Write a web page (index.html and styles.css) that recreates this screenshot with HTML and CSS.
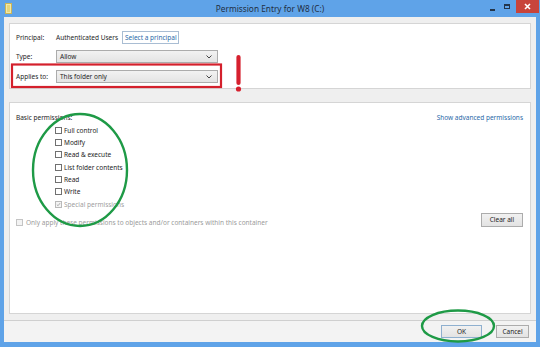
FILE: index.html
```html
<!DOCTYPE html>
<html>
<head>
<meta charset="utf-8">
<link rel="stylesheet" href="styles.css">
</head>
<body>
<div class="window">
  <div class="titlebar">
    <svg class="app-icon" width="7" height="11" viewBox="0 0 7 11">
      <rect x="0.5" y="0.5" width="6" height="10" fill="#f3e9a8" stroke="#c9b55a"/>
      <rect x="2" y="2" width="3" height="7" fill="#e6d67c"/>
    </svg>
    <div class="title">Permission Entry for W8 (C:)</div>
    <div class="controls">
      <span class="ctl-min"></span>
      <span class="ctl-max"></span>
      <span class="ctl-close">
        <svg width="7" height="7" viewBox="0 0 7 7"><path d="M1 1L6 6M6 1L1 6" stroke="#fff" stroke-width="1.6"/></svg>
      </span>
    </div>
  </div>
  <div class="client">
    <div class="main">
      <section class="panel top-panel">
        <div class="row">
          <span class="label">Principal:</span>
          <span class="value">Authenticated Users</span>
          <span class="principal-link">Select a principal</span>
        </div>
        <div class="row">
          <span class="label">Type:</span>
          <div class="select"><span>Allow</span><svg class="chev" width="6" height="4" viewBox="0 0 6 4"><path d="M0.5 0.5L3 3L5.5 0.5" fill="none" stroke="#444" stroke-width="1"/></svg></div>
        </div>
        <div class="row applies">
          <span class="label">Applies to:</span>
          <div class="select"><span>This folder only</span><svg class="chev" width="6" height="4" viewBox="0 0 6 4"><path d="M0.5 0.5L3 3L5.5 0.5" fill="none" stroke="#444" stroke-width="1"/></svg></div>
        </div>
      </section>
      <section class="panel perm-panel">
        <div class="perm-head">
          <span>Basic permissions:</span>
          <span class="link">Show advanced permissions</span>
        </div>
        <ul class="checklist">
          <li><span class="box"></span>Full control</li>
          <li><span class="box"></span>Modify</li>
          <li><span class="box"></span>Read &amp; execute</li>
          <li><span class="box"></span>List folder contents</li>
          <li><span class="box"></span>Read</li>
          <li><span class="box"></span>Write</li>
          <li class="disabled"><span class="box checked"><svg width="7" height="7" viewBox="0 0 7 7"><path d="M1.2 3.6L2.9 5.2L5.8 1.5" fill="none" stroke="#9a9a9a" stroke-width="1.1"/></svg></span>Special permissions</li>
        </ul>
        <div class="apply-row">
          <span class="apply-label"><span class="box dis"></span>Only apply these permissions to objects and/or containers within this container</span>
          <span class="btn clear-btn">Clear all</span>
        </div>
      </section>
    </div>
    <div class="footer">
      <span class="btn ok-btn">OK</span>
      <span class="btn">Cancel</span>
    </div>
  </div>
  <svg class="annotations" width="540" height="347" viewBox="0 0 540 347">
    <rect x="12" y="64.5" width="209" height="22.5" fill="none" stroke="#d4202c" stroke-width="2.2"/>
    <path d="M238.5 57 L238.5 83" stroke="#d6202e" stroke-width="4.2" stroke-linecap="round"/>
    <circle cx="238.5" cy="89" r="2.6" fill="#d6202e"/>
    <ellipse cx="80" cy="170" rx="47" ry="56" fill="none" stroke="#1e9a46" stroke-width="2.4"/>
    <ellipse cx="458" cy="326" rx="36" ry="15.5" fill="none" stroke="#1e9a46" stroke-width="2.4"/>
  </svg>
</div>
</body>
</html>
```

FILE: styles.css
```css
* { box-sizing: border-box; }
html, body { margin: 0; padding: 0; }
body {
  width: 540px;
  height: 347px;
  overflow: hidden;
  font-family: "Noto Sans", "Open Sans", sans-serif;
  font-size: 6.5px;
  color: #1e1e1e;
}
.window {
  position: relative;
  width: 540px;
  height: 347px;
  background: #5fa3e8;
  padding: 0 4px 5px 4px;
  display: flex;
  flex-direction: column;
}
.titlebar {
  height: 17px;
  display: flex;
  align-items: center;
  position: relative;
}
.app-icon { margin-left: 1px; margin-top: -1px; }
.title {
  position: absolute;
  left: 0;
  right: 0;
  top: 3px;
  text-align: center;
  font-size: 8.3px;
  color: #1f2f44;
  line-height: 11px;
}
.controls {
  margin-left: auto;
  display: flex;
  align-items: flex-start;
  align-self: flex-start;
  position: relative;
  z-index: 1;
}
.ctl-min {
  width: 5px;
  height: 2px;
  background: #23354a;
  margin-top: 9px;
  margin-right: 9px;
}
.ctl-max {
  width: 6px;
  height: 5px;
  border: 1px solid #23354a;
  border-top-width: 2px;
  margin-top: 4px;
  margin-right: 6px;
}
.ctl-close {
  width: 23px;
  height: 13px;
  background: #c8443b;
  display: flex;
  align-items: center;
  justify-content: center;
  margin-right: -3px;
}
.client {
  flex: 1;
  background: #efefef;
  display: flex;
  flex-direction: column;
}
.main {
  padding: 6px 5px 0 5px;
  display: flex;
  flex-direction: column;
  gap: 13px;
}
.panel {
  background: #fff;
  border: 1px solid #d5d5d5;
}
.top-panel {
  height: 66px;
  padding: 7px 0 0 6px;
  display: flex;
  flex-direction: column;
  gap: 6px;
}
.row {
  display: flex;
  align-items: center;
  height: 13px;
}
.label { width: 40px; flex: none; }
.value { margin-right: 4px; }
.principal-link {
  border: 1px solid #a9bdd3;
  color: #2a69a8;
  height: 13px;
  line-height: 11px;
  padding: 0 1px 0 2px;
}
.select {
  width: 162px;
  height: 13px;
  border: 1px solid #acacac;
  background: linear-gradient(#f2f2f2, #e4e4e4);
  display: flex;
  align-items: center;
  padding: 0 5px 0 3px;
  justify-content: space-between;
}
.applies { margin-top: 1px; }
.perm-panel {
  height: 212px;
  padding: 9px 7px 0 6px;
  display: flex;
  flex-direction: column;
}
.perm-head {
  display: flex;
  justify-content: space-between;
  align-items: center;
  height: 10px;
}
.link { color: #2a69a8; }
.checklist {
  list-style: none;
  margin: 2px 0 0 39px;
  padding: 0;
}
.checklist li {
  height: 12.35px;
  display: flex;
  align-items: center;
}
.box {
  width: 7px;
  height: 7px;
  border: 1px solid #707070;
  background: #fff;
  margin-right: 2px;
  flex: none;
  display: flex;
  align-items: center;
  justify-content: center;
}
.checklist li.disabled { color: #a0a0a0; }
.box.checked { border-color: #b9b9b9; background: #f4f4f4; }
.box.checked svg { display: block; }
.apply-row {
  display: flex;
  justify-content: space-between;
  align-items: center;
  margin-top: 2px;
  padding-right: 0;
}
.apply-label {
  display: flex;
  align-items: center;
  color: #9b9b9b;
  margin-top: 6px;
}
.box.dis { border-color: #c4c4c4; background: #f3f3f3; margin-right: 3px; }
.btn {
  display: inline-flex;
  align-items: center;
  justify-content: center;
  height: 14px;
  border: 1px solid #acacac;
  background: linear-gradient(#f1f1f1, #e3e3e3);
  color: #1e1e1e;
}
.clear-btn { width: 42px; }
.footer {
  margin-top: auto;
  height: 22px;
  border-top: 1px solid #cfcfcf;
  background: #f3f3f3;
  display: flex;
  justify-content: flex-end;
  align-items: center;
  gap: 14px;
  padding: 0 7px 0 0;
}
.footer .btn { width: 33px; height: 13px; }
.footer .ok-btn { width: 41px; border-color: #8fb0cf; }
.annotations {
  position: absolute;
  left: 0;
  top: 0;
  pointer-events: none;
}
```
